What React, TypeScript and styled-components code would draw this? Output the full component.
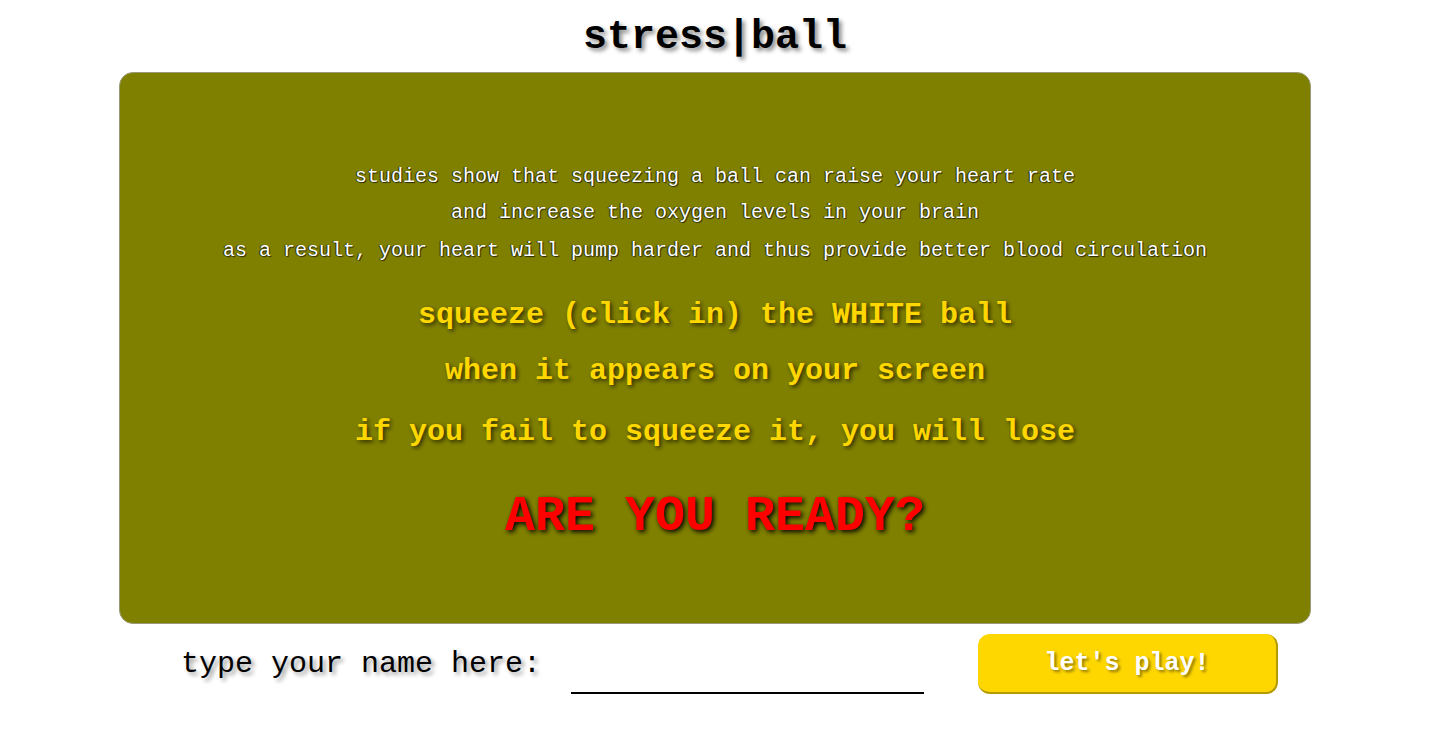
import styled, { createGlobalStyle } from 'styled-components'

const GlobalStyle = createGlobalStyle`
  body {
    margin: 0;
    background: #ffffff;
    font-family: "Liberation Mono", "DejaVu Sans Mono", monospace;
  }
`

const Page = styled.div`
  display: flex;
  flex-direction: column;
  align-items: center;
  padding-right: 3px;
`

const Title = styled.h1`
  margin: 0;
  padding-top: 11px;
  font-size: 40px;
  line-height: 54px;
  font-weight: bold;
  color: #000;
  text-shadow: 3px 3px 4px rgba(0, 0, 0, 0.45);
`

const Panel = styled.div`
  margin-top: 7px;
  width: 1190px;
  box-sizing: content-box;
  border: 1px solid #9a9a7a;
  border-radius: 14px;
  background: #808000;
  padding: 86px 0 71px;
  display: flex;
  flex-direction: column;
  align-items: center;
  text-align: center;
`

const Intro = styled.div`
  font-size: 20px;
  line-height: 36px;
  letter-spacing: 0;
  color: #ffffff;
  text-shadow: 1px 1px 1px #2a2a00, -1px 0 1px #2a2a00;
`

const IntroLast = styled.div`
  margin-top: 2px;
`

const Rule = styled.div<{ $gap: number }>`
  margin-top: ${({ $gap }) => $gap}px;
  font-size: 30px;
  line-height: 56px;
  font-weight: bold;
  color: #ffd700;
  text-shadow: 2px 2px 4px #2a2a00;
`

const Ready = styled.div`
  margin-top: 22px;
  font-size: 50px;
  line-height: 70px;
  font-weight: bold;
  color: #ff0000;
  text-shadow: 2px 2px 5px #000;
`

const Footer = styled.div`
  width: 1192px;
  margin-top: 10px;
  display: flex;
  align-items: center;
  padding-left: 62px;
  box-sizing: border-box;
`

const Label = styled.label`
  flex-shrink: 0;
  width: 360px;
  white-space: nowrap;
  font-size: 30px;
  color: #000;
  text-shadow: 3px 3px 4px rgba(0, 0, 0, 0.4);
`

const NameInput = styled.input`
  flex-shrink: 0;
  margin-left: 30px;
  width: 353px;
  height: 40px;
  padding: 0;
  box-sizing: border-box;
  align-self: flex-end;
  border: none;
  border-bottom: 2px solid #000;
  outline: none;
  background: transparent;
  font-family: inherit;
  font-size: 22px;
`

const PlayButton = styled.button`
  flex-shrink: 0;
  margin-left: 54px;
  width: 300px;
  height: 60px;
  border: none;
  border-right: 2px solid #b59a00;
  border-bottom: 2px solid #b59a00;
  border-radius: 12px;
  background: #ffd700;
  color: #ffffff;
  font-family: inherit;
  font-size: 25px;
  font-weight: bold;
  text-shadow: 2px 2px 3px rgba(0, 0, 0, 0.45);
  cursor: pointer;
`

const App = () => {
  return (
    <Page>
      <GlobalStyle />
      <Title>stress|ball</Title>
      <Panel>
        <Intro>
          studies show that squeezing a ball can raise your heart rate
          <br />
          and increase the oxygen levels in your brain
          <IntroLast>
            as a result, your heart will pump harder and thus provide better blood circulation
          </IntroLast>
        </Intro>
        <Rule $gap={18}>squeeze (click in) the WHITE ball</Rule>
        <Rule $gap={0}>when it appears on your screen</Rule>
        <Rule $gap={5}>if you fail to squeeze it, you will lose</Rule>
        <Ready>ARE YOU READY?</Ready>
      </Panel>
      <Footer>
        <Label htmlFor="name">type your name here:</Label>
        <NameInput id="name" type="text" />
        <PlayButton>let's play!</PlayButton>
      </Footer>
    </Page>
  )
}

export default App
